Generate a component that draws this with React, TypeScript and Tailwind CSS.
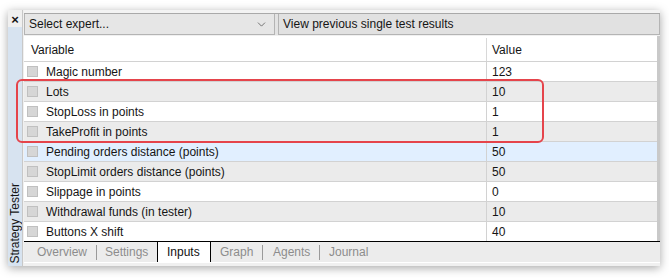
import { ChevronDown } from 'lucide-react';

const rows = [
  { name: 'Magic number', value: '123', bg: 'bg-white' },
  { name: 'Lots', value: '10', bg: 'bg-[#ebebeb]' },
  { name: 'StopLoss in points', value: '1', bg: 'bg-white' },
  { name: 'TakeProfit in points', value: '1', bg: 'bg-[#ebebeb]' },
  { name: 'Pending orders distance (points)', value: '50', bg: 'bg-[#e1efff]' },
  { name: 'StopLimit orders distance (points)', value: '50', bg: 'bg-[#ebebeb]' },
  { name: 'Slippage in points', value: '0', bg: 'bg-white' },
  { name: 'Withdrawal funds (in tester)', value: '10', bg: 'bg-[#ebebeb]' },
  { name: 'Buttons X shift', value: '40', bg: 'bg-white' },
];

const Sep = () => <span className="h-[15px] w-px self-center bg-[#9a9a9a]" />;

export default function App() {
  return (
    <div className="relative w-[669px] h-[278px] bg-white pl-[8px] pt-[10px] font-['Liberation_Sans',Arial,sans-serif] text-[12px] leading-none text-[#151515]">
      <div className="flex w-[652px] h-[256px] bg-[#f0f0f0] shadow-[0_2px_9px_rgba(0,0,0,0.35)]">
        {/* left dock strip */}
        <div className="flex w-[14px] flex-col">
          <div className="flex h-[17px] items-center justify-center pt-[2px] text-[13px] font-bold">×</div>
          <div className="flex flex-1 flex-col items-center justify-end bg-[#d7e3f0] pb-[3px]">
            <span className="rotate-180 whitespace-nowrap text-[12px] [writing-mode:vertical-rl]">Strategy Tester</span>
          </div>
        </div>
        <div className="w-[2px] border-l border-[#c8c8c8]" />

        <div className="flex flex-1 flex-col">
          {/* toolbar */}
          <div className="h-[3px] bg-[#f3f3f3]" />
          <div className="flex h-[22px] gap-[3px] border-t border-[#a9a9a9] bg-[#e3e3e3]">
            <div className="flex w-[251px] items-center justify-between border border-t-0 border-[#b4b4b4] bg-[#e6e6e6] pl-[4px] pr-[6px]">
              <span>Select expert...</span>
              <ChevronDown size={13} strokeWidth={1.3} className="text-[#444]" />
            </div>
            <div className="flex flex-1 items-center border border-t-0 border-[#b4b4b4] bg-[#e1e1e1] pl-[4px]">
              View previous single test results
            </div>
          </div>
          <div className="h-px bg-[#f0f0f0]" />

          {/* grid */}
          <div className="flex flex-1">
            <div className="flex flex-1 flex-col bg-white">
              <div className="flex h-[25px] items-center">
                <div className="w-[462px] pl-[7px] pt-[2px]">Variable</div>
                <div className="flex h-[23px] items-center self-end border-l border-[#d8d8d8] pl-[5px] pt-[1px]">Value</div>
              </div>
              {rows.map((r) => (
                <div key={r.name} className={`flex h-[20px] items-stretch border-t border-[#d2d2d2] ${r.bg}`}>
                  <div className="flex w-[462px] items-center">
                    <span className="ml-[3px] h-[11px] w-[11px] border border-[#c0c0c0] bg-[#d6d6d6]" />
                    <span className="ml-[8px]">{r.name}</span>
                  </div>
                  <div className="flex flex-1 items-center border-l border-[#d2d2d2] pl-[5px]">{r.value}</div>
                </div>
              ))}
            </div>
            <div className="w-[3px] bg-[#c9c9c9]" />
          </div>

          {/* tabs */}
          <div className="flex h-[21px] items-stretch whitespace-nowrap border-t border-black bg-[#ececec] text-[#8c8c8c]">
            <span className="flex w-[72px] items-center pl-[13px]">Overview</span>
            <Sep />
            <span className="flex w-[60px] items-center pl-[8px]">Settings</span>
            <span className="flex w-[54px] items-center border-x border-black bg-white pl-[9px] text-[#111]">Inputs</span>
            <span className="flex w-[51px] items-center pl-[9px]">Graph</span>
            <Sep />
            <span className="flex w-[56px] items-center pl-[10px]">Agents</span>
            <Sep />
            <span className="flex items-center pl-[9px]">Journal</span>
          </div>
          <div className="h-[4px] border-t border-white bg-[#f0f0f0]" />
        </div>
      </div>

      {/* highlight overlay */}
      <div className="absolute left-[16px] top-[79px] h-[64px] w-[528px] rounded-[6px] border-2 border-[#e5444b]" />
    </div>
  );
}
